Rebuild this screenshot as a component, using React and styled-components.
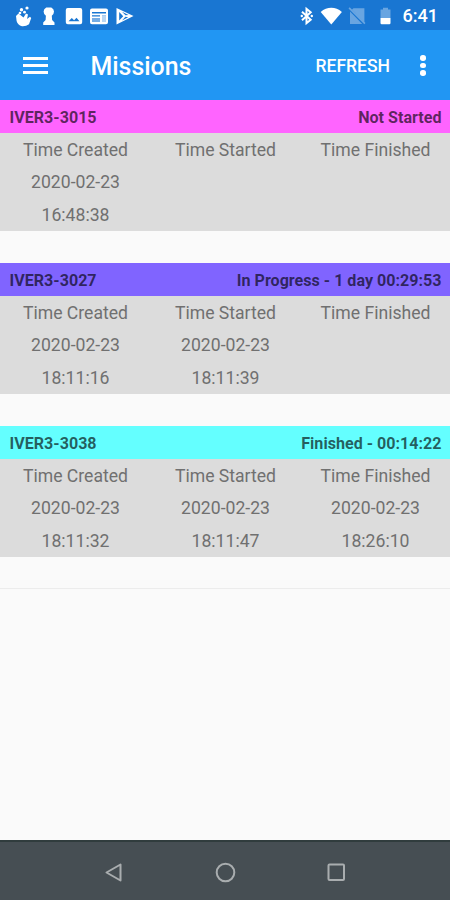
import styled, { createGlobalStyle } from "styled-components";

const GlobalStyle = createGlobalStyle`
  * {
    box-sizing: border-box;
  }

  body {
    margin: 0;
    font-family: Roboto, "Liberation Sans", sans-serif;
    background: #fafafa;
  }
`;

const Screen = styled.div`
  display: flex;
  flex-direction: column;
  height: 900px;
  overflow: hidden;
  background: #fafafa;
`;

//status bar
const StatusBar = styled.header`
  display: flex;
  align-items: center;
  justify-content: space-between;
  height: 30px;
  flex: none;
  padding: 1px 12px 0 13px;
  color: #fff;
  background: #1976d2;
`;

const StatusIcons = styled.div`
  display: flex;
  align-items: center;
  gap: ${(props) => props.$gap || 0}px;
`;

const Clock = styled.span`
  margin-left: 5px;
  font-size: 18.1px;
  font-weight: 500;
  line-height: 28px;
`;

const StatusSvg = styled.svg`
  display: block;
  flex: none;
  width: ${(props) => props.$width || 22}px;
  height: 24px;
  fill: #fff;
`;

//app bar
const AppBar = styled.div`
  display: flex;
  align-items: center;
  height: 70px;
  flex: none;
  padding: 1px 18px 0 23px;
  color: #fff;
  background: #2196f3;
`;

const MenuButton = styled.button`
  display: flex;
  flex-direction: column;
  gap: 4px;
  width: 25px;
  padding: 0;
  border: none;
  background: none;
`;

const MenuLine = styled.span`
  height: 3px;
  background: #fff;
`;

const Title = styled.h1`
  flex: 1;
  margin: 2px 0 0 42.5px;
  font-size: 24.9px;
  font-weight: 500;
  line-height: 34px;
`;

const RefreshButton = styled.button`
  padding: 0;
  border: none;
  color: #fff;
  background: none;
  font-family: inherit;
  font-size: 17.5px;
  font-weight: 500;
  line-height: 24px;
`;

const MoreButton = styled.button`
  display: flex;
  flex-direction: column;
  align-items: center;
  gap: 2px;
  width: 18px;
  margin-left: 24px;
  padding: 0;
  border: none;
  background: none;
`;

const Dot = styled.span`
  width: 5.5px;
  height: 5.5px;
  border-radius: 50%;
  background: #fff;
`;

//missions
const List = styled.main`
  flex: 1;
`;

const MissionItem = styled.section`
  height: 163px;

  &:last-child {
    border-bottom: 1px solid #ececec;
  }
`;

const MissionHeader = styled.div`
  display: flex;
  align-items: center;
  justify-content: space-between;
  height: 32.5px;
  padding: 2px 8.5px 0 9.5px;
  color: rgba(0, 0, 0, 0.64);
  background: ${(props) => props.$color};
  font-size: 16.1px;
  font-weight: 700;
`;

const Times = styled.div`
  display: grid;
  grid-template-columns: repeat(3, 1fr);
  height: 98px;
  background: #dcdcdc;
`;

const TimeColumn = styled.div`
  display: flex;
  flex-direction: column;
  padding: 1px 0 0 1px;
  color: #707070;
  font-size: 17.6px;
  line-height: 32.5px;
  text-align: center;
`;

//navigation bar
const NavBar = styled.nav`
  display: flex;
  align-items: center;
  justify-content: center;
  gap: 86px;
  height: 60px;
  flex: none;
  padding-top: 2px;
  border-top: 2px solid #303c3d;
  background: #464e53;
`;

const NavIcon = styled.svg`
  width: 25px;
  height: 25px;
  fill: none;
  stroke: #a9adaf;
  stroke-width: 2;
`;

const missions = [
  {
    name: "IVER3-3015",
    status: "Not Started",
    color: "#ff64ff",
    created: ["2020-02-23", "16:48:38"],
  },
  {
    name: "IVER3-3027",
    status: "In Progress - 1 day 00:29:53",
    color: "#8064ff",
    created: ["2020-02-23", "18:11:16"],
    started: ["2020-02-23", "18:11:39"],
  },
  {
    name: "IVER3-3038",
    status: "Finished - 00:14:22",
    color: "#64ffff",
    created: ["2020-02-23", "18:11:32"],
    started: ["2020-02-23", "18:11:47"],
    finished: ["2020-02-23", "18:26:10"],
  },
];

const Time = ({ label, value = [] }) => {
  return (
    <TimeColumn>
      <span>{label}</span>
      {value.map((line) => (
        <span key={line}>{line}</span>
      ))}
    </TimeColumn>
  );
};

const Mission = ({ name, status, color, created, started, finished }) => {
  return (
    <MissionItem>
      <MissionHeader $color={color}>
        <span>{name}</span>
        <span>{status}</span>
      </MissionHeader>
      <Times>
        <Time label="Time Created" value={created} />
        <Time label="Time Started" value={started} />
        <Time label="Time Finished" value={finished} />
      </Times>
    </MissionItem>
  );
};

const Notifications = () => {
  return (
    <StatusIcons $gap={3}>
      <StatusSvg viewBox="0 0 22 24">
        <path d="M3 12 5.5 9.5 10.5 13.5 13 9.5l2 1-1 4.5 3-2.3 1.2 1.4-2.2 6.2Q13 22.5 9 22.2 4.5 21 3.6 17z" />
        <circle cx="8.5" cy="5.8" r="1.7" />
        <circle cx="14" cy="4" r="1.6" />
        <circle cx="11.5" cy="8.2" r="1.4" />
        <circle cx="7" cy="9" r="1.3" />
      </StatusSvg>
      <StatusSvg viewBox="0 0 22 24">
        <path d="M8.3 3.5h5q2.7 1.4 2.7 4t-2.2 4.3l.3 4.2 2.4 2.5V21H5.2v-2.5L7.6 16l.3-4.2Q5.6 10.100 5.600 7.500t2.700-4z" />
      </StatusSvg>
      <StatusSvg viewBox="0 0 22 24">
        <path
          fillRule="evenodd"
          d="M4.800 4h12.400q2 0 2 2v12.200q0 2-2 2H4.800q-2 0-2-2V6q0-2 2-2zM5.500 17.300h11l-3-3.600-2.400 2.500-2.300-2.100z"
        />
      </StatusSvg>
      <StatusSvg viewBox="0 0 22 24">
        <path
          fillRule="evenodd"
          d="M4 4.500h14q2 0 2 2v11.800q0 2-2 2H4q-2 0-2-2V6.500q0-2 2-2zM4 8v1.500h14V8zM4 11.300v1.200h8v-1.200zM4 14v4h8v-4zM14 11.300V18h4v-6.700z"
        />
        <path opacity=".4" d="M4 14h8v4H4z" />
        <path opacity=".7" d="M14 11.300h4V18h-4z" />
      </StatusSvg>
      <StatusSvg viewBox="0 0 22 24">
        <path
          fillRule="evenodd"
          d="M3.500 4 20.500 12 3.500 20.500zM6.200 8v8.500l4-4.300zM9 7.800l3.500 3.500 3-.3zM9 16.500l6.200-3.200-2.800-.6z"
        />
      </StatusSvg>
    </StatusIcons>
  );
};

const SystemStatus = () => {
  return (
    <StatusIcons>
      <StatusSvg viewBox="0 0 24 24" $width={24}>
        <path
          d="m7 7.800 8.700 8-4.200 3.400V4.800l4.200 3.400-8.700 8"
          style={{ fill: "none" }}
          stroke="#fff"
          strokeWidth="2"
        />
        <circle cx="6.800" cy="12" r="1.200" />
        <circle cx="16.800" cy="12" r="1.200" />
      </StatusSvg>
      <StatusSvg viewBox="0 0 26 24" $width={26}>
        <path d="M1.700 8Q6.600 3.800 12.300 3.800T22.900 8L12.300 20.500z" />
      </StatusSvg>
      <StatusSvg viewBox="0 0 28 24" $width={28}>
        <path opacity=".35" d="M8.500 4.200h10.900V18L7 5.600zM5 7.500 17.200 20H5z" />
        <path opacity=".35" d="m3.500 4.500 1.200-1.200L20.500 19l-1.200 1.200z" />
      </StatusSvg>
      <StatusSvg viewBox="0 0 24 24" $width={24}>
        <path opacity=".35" d="M7.500 5.500H10V3.800h5v1.700h2.500v8.500h-10z" />
        <path d="M7.500 14h10v5q0 1.200-1.200 1.200H8.700q-1.200 0-1.200-1.200z" />
      </StatusSvg>
      <Clock>6:41</Clock>
    </StatusIcons>
  );
};

const App = () => {
  return (
    <>
      <GlobalStyle />
      <Screen>
        <StatusBar>
          <Notifications />
          <SystemStatus />
        </StatusBar>
        <AppBar>
          <MenuButton aria-label="Menu">
            <MenuLine />
            <MenuLine />
            <MenuLine />
          </MenuButton>
          <Title>Missions</Title>
          <RefreshButton>REFRESH</RefreshButton>
          <MoreButton aria-label="More">
            <Dot />
            <Dot />
            <Dot />
          </MoreButton>
        </AppBar>
        <List>
          {missions.map((mission) => (
            <Mission key={mission.name} {...mission} />
          ))}
        </List>
        <NavBar>
          <NavIcon viewBox="0 0 25 25">
            <path d="M18.500 4.500v16l-14-8z" strokeLinejoin="round" />
          </NavIcon>
          <NavIcon viewBox="0 0 25 25">
            <circle cx="12.500" cy="12.500" r="8.800" />
          </NavIcon>
          <NavIcon viewBox="0 0 25 25">
            <rect x="4.500" y="4.500" width="15.500" height="15.500" rx="1" />
          </NavIcon>
        </NavBar>
      </Screen>
    </>
  );
};

export default App;
